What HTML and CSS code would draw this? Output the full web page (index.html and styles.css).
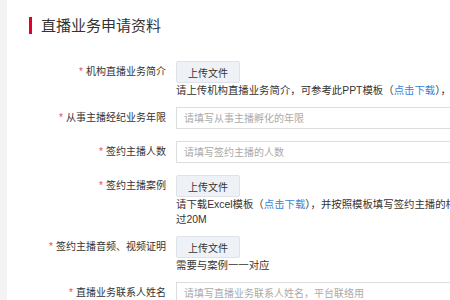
FILE: index.html
```html
<!DOCTYPE html>
<html lang="zh-CN">
<head>
    <meta charset="UTF-8">
    <meta name="viewport" content="width=device-width, initial-scale=1.0">
    <title>直播业务申请资料</title>
    <link rel="stylesheet" href="styles.css">
</head>
<body>
    <div class="page">
        <div class="panel">
            <h2 class="section-title">直播业务申请资料</h2>

            <form class="apply-form">
                <div class="form-row form-row-upload">
                    <label class="form-label"><span class="required">*</span>机构直播业务简介</label>
                    <div class="form-field">
                        <button type="button" class="btn-upload">上传文件</button>
                        <p class="form-hint">请上传机构直播业务简介，可参考此PPT模板（<a href="#" class="hint-link">点击下载</a>），文件不超过20M</p>
                    </div>
                </div>

                <div class="form-row">
                    <label for="years" class="form-label"><span class="required">*</span>从事主播经纪业务年限</label>
                    <div class="form-field">
                        <input type="text" id="years" class="form-control" placeholder="请填写从事主播孵化的年限">
                    </div>
                </div>

                <div class="form-row">
                    <label for="anchors" class="form-label"><span class="required">*</span>签约主播人数</label>
                    <div class="form-field">
                        <input type="text" id="anchors" class="form-control" placeholder="请填写签约主播的人数">
                    </div>
                </div>

                <div class="form-row form-row-upload">
                    <label class="form-label"><span class="required">*</span>签约主播案例</label>
                    <div class="form-field">
                        <button type="button" class="btn-upload">上传文件</button>
                        <p class="form-hint">请下载Excel模板（<a href="#" class="hint-link">点击下载</a>），并按照模板填写签约主播的相关信息，文件大小不超过20M</p>
                    </div>
                </div>

                <div class="form-row form-row-upload">
                    <label class="form-label"><span class="required">*</span>签约主播音频、视频证明</label>
                    <div class="form-field">
                        <button type="button" class="btn-upload">上传文件</button>
                        <p class="form-hint">需要与案例一一对应</p>
                    </div>
                </div>

                <div class="form-row">
                    <label for="contact" class="form-label"><span class="required">*</span>直播业务联系人姓名</label>
                    <div class="form-field">
                        <input type="text" id="contact" class="form-control" placeholder="请填写直播业务联系人姓名，平台联络用">
                    </div>
                </div>
            </form>
        </div>
    </div>
</body>
</html>
```

FILE: styles.css
```css
/* Base */
* {
    margin: 0;
    padding: 0;
    box-sizing: border-box;
}

body {
    font-family: "Liberation Sans", "Noto Sans CJK SC", sans-serif;
    background-color: #ffffff;
    color: #333333;
    overflow: hidden;
}

.page {
    min-height: 100vh;
    border-left: 7px solid #f3f3f3;
}

.panel {
    padding-top: 17px;
}

/* Title */
.section-title {
    margin-left: 22px;
    padding-left: 9px;
    border-left: 3px solid #e60027;
    font-size: 15px;
    font-weight: 400;
    line-height: 17px;
    color: #333333;
}

/* Form */
.apply-form {
    margin-top: 27px;
}

.form-row {
    display: grid;
    grid-template-columns: 159px 388px;
    column-gap: 10px;
    margin-bottom: 12px;
}

.form-row-upload {
    margin-bottom: 9px;
}

.form-label {
    font-size: 10px;
    line-height: 22px;
    text-align: right;
    color: #333333;
    white-space: nowrap;
}

.required {
    color: #ee4a55;
    margin-right: 3px;
}

.form-control {
    display: block;
    width: 320px;
    height: 22px;
    padding: 0 7px;
    font-family: inherit;
    font-size: 10px;
    color: #333333;
    background-color: #ffffff;
    border: 1px solid #dddddd;
    border-radius: 0;
    outline: none;
}

.form-control::placeholder {
    color: #aaaaaa;
}

.btn-upload {
    display: block;
    width: 64px;
    height: 22px;
    font-family: inherit;
    font-size: 10px;
    color: #333333;
    background-color: #eef1f5;
    border: 1px solid #dfe3e9;
    border-radius: 2px;
    cursor: pointer;
}

.form-hint {
    font-size: 10.4px;
    line-height: 15px;
    color: #333333;
}

.hint-link {
    color: #3b7fd9;
    text-decoration: none;
}
```
